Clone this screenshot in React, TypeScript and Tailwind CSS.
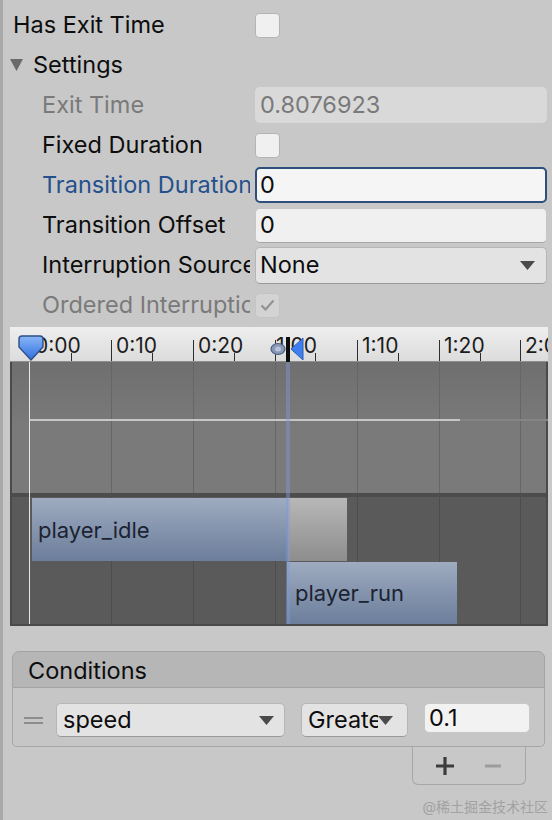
import React from "react";

const labelW = "w-[237px] shrink-0 overflow-hidden whitespace-nowrap";

function Arrow() {
  return (
    <svg width="15" height="9" viewBox="0 0 15 9" className="shrink-0">
      <path d="M0 0 H15 L7.5 9 Z" fill="#4a4a4a" />
    </svg>
  );
}

function Checkbox({ checked, disabled }: { checked?: boolean; disabled?: boolean }) {
  return (
    <div
      className={`flex h-[25px] w-[25px] items-center justify-center rounded-[4px] border ${
        disabled ? "border-[#c4c4c4] bg-[#d3d3d3]" : "border-[#b4b4b4] bg-[#f0f0f0]"
      }`}
    >
      {checked && (
        <svg width="15" height="12" viewBox="0 0 15 12">
          <path d="M1.5 6.5 L5.5 10.5 L13.5 1.5" fill="none" stroke="#939393" strokeWidth="2.2" />
        </svg>
      )}
    </div>
  );
}

function Row({
  label,
  indent,
  tone = "text-[#0d0d0d]",
  children,
}: {
  label: string;
  indent?: boolean;
  tone?: string;
  children?: React.ReactNode;
}) {
  return (
    <div className="flex h-10 items-center">
      <div className={`${labelW} ${indent ? "pl-[29px]" : ""} ${tone}`}>{label}</div>
      <div className="ml-[5px] flex flex-1 items-center">{children}</div>
    </div>
  );
}

const majors = [101, 183, 265, 347, 429, 510];
const minors = [61, 142, 224, 305, 388, 470];
const labels = [
  { x: 25, t: "0:00" },
  { x: 106, t: "0:10" },
  { x: 188, t: "0:20" },
  { x: 266, t: "1:00" },
  { x: 352, t: "1:10" },
  { x: 434, t: "1:20" },
  { x: 515, t: "2:00" },
];

function Timeline() {
  return (
    <div className="relative ml-[7px] mt-[2px] flex h-[299px] w-[538px] flex-col overflow-hidden">
      {/* ruler */}
      <div className="relative h-[35px] shrink-0 border-b border-[#8e8e8e] bg-gradient-to-b from-[#eeeeee] to-[#dcdcdc]">
        {labels.map((l) => (
          <span
            key={l.t}
            className="absolute top-[6px] text-[21px] leading-[26px] text-[#1c1c1c]"
            style={{ left: l.x }}
          >
            {l.t}
          </span>
        ))}
        {majors.map((x) => (
          <div key={x} className="absolute bottom-0 h-[21px] w-px bg-[#2e2e2e]" style={{ left: x }} />
        ))}
        {minors.map((x) => (
          <div key={x} className="absolute bottom-0 h-[8px] w-px bg-[#2e2e2e]" style={{ left: x }} />
        ))}
        {/* start marker */}
        <svg width="28" height="27" viewBox="0 0 28 27" className="absolute left-[7px] top-[8px]">
          <defs>
            <linearGradient id="mk" x1="0" y1="0" x2="0" y2="1">
              <stop offset="0" stopColor="#8ab6f6" />
              <stop offset="1" stopColor="#2f6fe0" />
            </linearGradient>
          </defs>
          <path d="M2 4 Q2 1 5 1 H23 Q26 1 26 4 V12 L14 25 L2 12 Z" fill="url(#mk)" stroke="#2b4f86" strokeWidth="1.4" />
        </svg>
        {/* transition markers */}
        <svg width="16" height="14" viewBox="0 0 16 14" className="absolute left-[260px] top-[15px]">
          <ellipse cx="8" cy="7" rx="7" ry="5.5" fill="#8797b4" stroke="#4b5d7e" strokeWidth="1.2" />
          <ellipse cx="8" cy="7" rx="3" ry="2.5" fill="#b6c3da" />
        </svg>
        <div className="absolute left-[276px] top-[10px] h-[25px] w-[4px] bg-[#0d0d0d]" />
        <svg width="14" height="24" viewBox="0 0 14 24" className="absolute left-[280px] top-[10px]">
          <path d="M13 1 V23 L1 12 Z" fill="#3d7ff0" stroke="#2a5db8" strokeWidth="1" />
        </svg>
      </div>

      {/* upper curve area */}
      <div className="relative h-[131px] shrink-0 border-x-2 border-[#4a4a4a] bg-gradient-to-b from-[#6f6f6f] via-[#7a7a7a] to-[#7a7a7a]">
        {majors.map((x) => (
          <div key={x} className="absolute inset-y-0 w-px bg-[#666666]" style={{ left: x - 2 }} />
        ))}
        <div className="absolute left-[18px] top-[57px] h-[2px] w-[430px] bg-[#c6c6c6]" />
        <div className="absolute left-[448px] top-[57px] h-[2px] w-[90px] bg-[#858585]" />
      </div>

      <div className="h-[4px] shrink-0 border-x-2 border-[#4a4a4a] bg-[#4c4c4c]" />

      {/* clip area */}
      <div className="relative h-[127px] shrink-0 border-x-2 border-[#4a4a4a] bg-[#5a5a5a]">
        {majors.map((x) => (
          <div key={x} className="absolute inset-y-0 w-px bg-[#4d4d4d]" style={{ left: x - 2 }} />
        ))}
        <div className="absolute left-[20px] top-px flex h-[63px] w-[256px] items-center bg-gradient-to-b from-[#9eabc0] to-[#6c7e9b] pl-[6px] text-[22px] text-[#1b2331]">
          player_idle
        </div>
        <div className="absolute left-[276px] top-px h-[63px] w-[59px] bg-gradient-to-b from-[#b8b8b8] to-[#8d8d8d]" />
        <div className="absolute left-[275px] top-[65px] flex h-[62px] w-[170px] items-center bg-gradient-to-b from-[#9eabc0] to-[#6c7e9b] pl-[8px] text-[22px] text-[#1b2331]">
          player_run
        </div>
      </div>
      <div className="h-[2px] shrink-0 bg-[#4a4a4a]" />

      {/* overlays across tracks */}
      <div className="absolute bottom-[2px] left-[19px] top-[35px] w-px bg-[#e8e8e8]" />
      <div className="absolute bottom-[2px] left-[276px] top-[35px] w-[4px] bg-[#7f9ad6]/45" />
    </div>
  );
}

export default function App() {
  return (
    <div className="min-h-[820px] w-[552px] border-l-[3px] border-[#a8a8a8] bg-[#c8c8c8] font-['Inter','Noto_Sans_CJK_SC',sans-serif] text-[23.5px] leading-[30px]">
      <div className="pl-[10px] pr-[5px] pt-[5px]">
        <Row label="Has Exit Time">
          <Checkbox />
        </Row>
        <div className="flex h-10 items-center">
          <svg width="13" height="12" viewBox="0 0 13 12" className="-ml-[3px] shrink-0">
            <path d="M0 0 H13 L6.5 12 Z" fill="#6a6a6a" />
          </svg>
          <span className="ml-[10px] text-[#0d0d0d]">Settings</span>
        </div>
        <Row label="Exit Time" indent tone="text-[#7a7a7a]">
          <div className="flex h-[36px] flex-1 items-center rounded-[5px] bg-[#d9d9d9] pl-[5px] text-[#7a7a7a]">
            0.8076923
          </div>
        </Row>
        <Row label="Fixed Duration" indent>
          <Checkbox />
        </Row>
        <Row label="Transition Duration" indent tone="text-[#24508d]">
          <div className="flex h-[36px] flex-1 items-center rounded-[5px] border-2 border-[#2d4f7b] bg-[#f5f5f5] pl-[3px] text-[#0d0d0d]">
            0
          </div>
        </Row>
        <Row label="Transition Offset" indent>
          <div className="flex h-[35px] flex-1 items-center rounded-[5px] border border-[#c6c6c6] border-b-[#a6a6a6] bg-[#f0f0f0] pl-[4px] text-[#0d0d0d]">
            0
          </div>
        </Row>
        <Row label="Interruption Source" indent>
          <div className="flex h-[37px] flex-1 items-center justify-between rounded-[5px] border border-[#b6b6b6] border-b-[#999999] bg-[#e3e3e3] pl-[4px] pr-[11px] text-[#0d0d0d]">
            <span>None</span>
            <Arrow />
          </div>
        </Row>
        <Row label="Ordered Interruption" indent tone="text-[#7a7a7a]">
          <Checkbox checked disabled />
        </Row>
      </div>

      <Timeline />

      <div className="ml-[9px] mt-[25px] w-[533px]">
        <div className="flex h-[37px] items-center rounded-t-[7px] border border-[#a3a3a3] bg-[#b6b6b6] pl-[15px] pt-[2px] text-[#0d0d0d]">
          Conditions
        </div>
        <div className="flex h-[59px] items-center rounded-b-[5px] border border-t-0 border-[#a6a6a6] bg-[#c6c6c6] pl-[11px] pr-[14px] pt-[6px]">
          <div className="flex w-[19px] shrink-0 flex-col gap-[3px]">
            <div className="h-[2px] bg-[#8d8d8d]" />
            <div className="h-[2px] bg-[#8d8d8d]" />
          </div>
          <div className="ml-[13px] flex h-[34px] w-[229px] items-center justify-between rounded-[5px] border border-[#b6b6b6] border-b-[#999999] bg-[#e3e3e3] pl-[6px] pr-[10px] text-[#0d0d0d]">
            <span>speed</span>
            <Arrow />
          </div>
          <div className="ml-[16px] flex h-[34px] w-[107px] items-center rounded-[5px] border border-[#b6b6b6] border-b-[#999999] bg-[#e3e3e3] pl-[6px] pr-[10px] text-[#0d0d0d]">
            <span className="w-[70px] overflow-hidden whitespace-nowrap">Greater</span>
            <Arrow />
          </div>
          <div className="ml-[16px] flex h-[30px] w-[106px] items-center self-start mt-[9px] rounded-[5px] border border-[#c8c8c8] bg-[#f2f2f2] pl-[4px] text-[#0d0d0d]">
            0.1
          </div>
        </div>
        <div className="flex justify-end pr-[19px]">
          <div className="flex h-[38px] w-[114px] items-center gap-[30px] rounded-b-[6px] border border-t-0 border-[#a6a6a6] pl-[22px]">
            <svg width="20" height="20" viewBox="0 0 20 20">
              <path d="M10 1 V19 M1 10 H19" stroke="#3c3c3c" strokeWidth="3.2" />
            </svg>
            <svg width="16" height="4" viewBox="0 0 16 4">
              <path d="M0 2 H16" stroke="#9c9c9c" strokeWidth="3" />
            </svg>
          </div>
        </div>
      </div>

      <div className="mt-[12px] flex justify-end pr-[4px] text-[14px] leading-[20px] text-[#a2a2a2]">@稀土掘金技术社区</div>
    </div>
  );
}
